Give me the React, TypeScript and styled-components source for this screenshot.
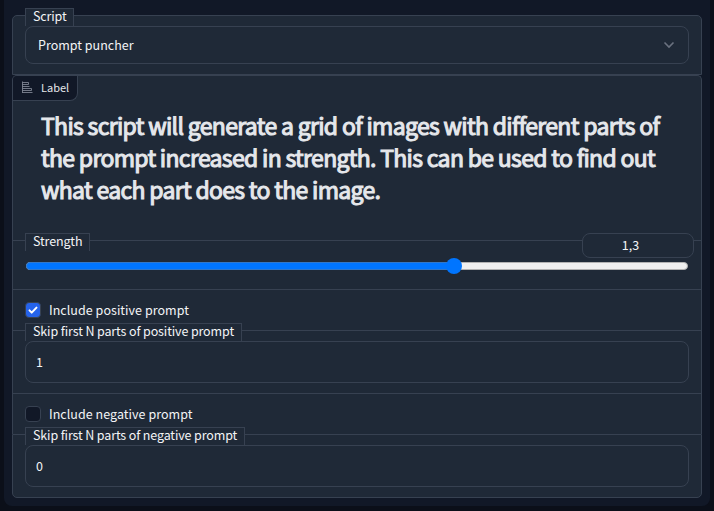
import React from "react";
import styled, { createGlobalStyle } from "styled-components";

const line = "#374151";
const surface = "#1f2937";
const deep = "#111827";

const GlobalStyle = createGlobalStyle`
  *, *::before, *::after { box-sizing: border-box; }
  body {
    margin: 0;
    background: #0b0f19;
    color: #f3f4f6;
    font-family: "Noto Sans CJK SC", "Noto Sans", sans-serif;
    font-size: 12.5px;
    line-height: 18px;
    overflow: hidden;
  }
`;

const Page = styled.main`
  height: 511px;
  padding: 0 4px 5px;
`;

const Panel = styled.div`
  width: 706px;
  height: 506px;
  padding: 15px 8px 8px;
  background: ${deep};
  border-radius: 0 0 8px 8px;
`;

const Section = styled.section<{ $height: number; $top?: boolean; $bottom?: boolean; $closed?: boolean }>`
  position: relative;
  height: ${(p) => p.$height}px;
  padding: 10px 12px 0;
  background: ${surface};
  border: 1px solid ${line};
  border-bottom-width: ${(p) => (p.$bottom || p.$closed ? 1 : 0)}px;
  border-radius: ${(p) => (p.$top ? "5px 5px" : "0 0")} ${(p) => (p.$bottom ? "5px 5px" : "0 0")};
`;

const Caption = styled.label<{ $tracking?: number }>`
  position: absolute;
  top: -8px;
  left: 12px;
  height: 18px;
  padding: 0 6.5px 0 7px;
  line-height: 14px;
  letter-spacing: ${(p) => p.$tracking ?? -0.13}px;
  white-space: nowrap;
  background: ${surface};
  border: 1px solid ${line};
  border-bottom: 0;
`;

const Select = styled.div`
  display: flex;
  align-items: center;
  justify-content: space-between;
  height: 38px;
  padding: 0 13px 0 12px;
  border: 1px solid ${line};
  border-radius: 8px;
`;

const Field = styled.input`
  display: block;
  width: 100%;
  height: 42px;
  padding: 0 10px 2px;
  color: inherit;
  font: inherit;
  background: transparent;
  border: 1px solid ${line};
  border-radius: 8px;
  outline: 0;
`;

const Tag = styled.div`
  position: absolute;
  top: 0;
  left: 0;
  display: flex;
  align-items: center;
  gap: 8px;
  width: 65px;
  height: 25px;
  padding: 0 0 2px 8px;
  color: #e5e7eb;
  font-size: 11px;
  background: ${deep};
  border: solid ${line};
  border-width: 0 1px 1px 0;
  border-radius: 4px 0 8px 0;
`;

const Heading = styled.h2`
  margin: 23px 0 0 16px;
  color: #e5e7eb;
  font-size: 23px;
  font-weight: 400;
  line-height: 32px;
  letter-spacing: -0.68px;
  -webkit-text-stroke: 1.05px #e5e7eb;
  white-space: nowrap;
`;

const Amount = styled.div`
  position: absolute;
  top: -8px;
  right: 7px;
  width: 112px;
  height: 25px;
  padding-right: 15px;
  line-height: 22px;
  text-align: center;
  background: ${surface};
  border: 1px solid ${line};
  border-radius: 8px;
`;

const Track = styled.div`
  display: flex;
  align-items: center;
  width: 662px;
  height: 8px;
  margin: 11px 0 0 1px;
  background: #efefef;
  border: 1px solid #b2b2b2;
  border-radius: 4px;
`;

const Filled = styled.div`
  width: 426px;
  height: 8px;
  margin-left: -1px;
  flex: none;
  background: #0075ff;
  border: 1px solid #3277c8;
  border-radius: 4px 0 0 4px;
`;

const Thumb = styled.div`
  flex: none;
  width: 16px;
  height: 16px;
  margin-left: -6px;
  background: #0075ff;
  border-radius: 50%;
`;

const CheckRow = styled.label`
  display: flex;
  align-items: center;
  gap: 8px;
  height: 20px;
  letter-spacing: 0.04px;
`;

const Box = styled.span<{ $checked?: boolean }>`
  display: flex;
  width: 16px;
  height: 16px;
  background: ${(p) => (p.$checked ? "#2563eb" : deep)};
  border: 1px solid ${line};
  border-radius: 4px;
`;

const lines = [
  "This script will generate a grid of images with different parts of",
  "the prompt increased in strength. This can be used to find out",
  "what each part does to the image.",
];

const ChartIcon = () => (
  <svg width="12" height="12" viewBox="0 0 12 12" fill="none" stroke="#8b929e">
    <path d="M1.5 .5v11M1 11.5h10.5M1.5 1.5h6v2h-6M1.5 5.5h7M1.5 7.5h9v2h-9" strokeWidth=".8" />
  </svg>
);

const Chevron = () => (
  <svg width="12" height="8" viewBox="0 0 12 8" fill="none" stroke="#6b7280" strokeWidth="1.6">
    <path d="M1.5 1.5 6 6l4.5-4.5" />
  </svg>
);

const Check = () => (
  <svg width="14" height="14" viewBox="0 0 14 14" fill="none" stroke="#fff" strokeWidth="2" strokeLinecap="round" strokeLinejoin="round">
    <path d="m3.5 7.4 2.2 2.2 4.8-5" />
  </svg>
);

export default function App() {
  return (
    <Page>
      <GlobalStyle />
      <Panel>
        <Section $height={60} $top $closed>
          <Caption>Script</Caption>
          <Select>
            <span>Prompt puncher</span>
            <Chevron />
          </Select>
        </Section>
        <Section $height={165} $top>
          <Tag>
            <ChartIcon />
            Label
          </Tag>
          <Heading>
            {lines.map((text) => (
              <React.Fragment key={text}>
                {text}
                <br />
              </React.Fragment>
            ))}
          </Heading>
        </Section>
        <Section $height={49}>
          <Caption>Strength</Caption>
          <Amount>1,3</Amount>
          <Track>
            <Filled />
            <Thumb />
          </Track>
        </Section>
        <Section $height={41}>
          <CheckRow>
            <Box $checked>
              <Check />
            </Box>
            Include positive prompt
          </CheckRow>
        </Section>
        <Section $height={63}>
          <Caption $tracking={-0.12}>Skip first N parts of positive prompt</Caption>
          <Field defaultValue="1" />
        </Section>
        <Section $height={41}>
          <CheckRow>
            <Box />
            Include negative prompt
          </CheckRow>
        </Section>
        <Section $height={64} $bottom>
          <Caption $tracking={-0.13}>Skip first N parts of negative prompt</Caption>
          <Field defaultValue="0" />
        </Section>
      </Panel>
    </Page>
  );
}
